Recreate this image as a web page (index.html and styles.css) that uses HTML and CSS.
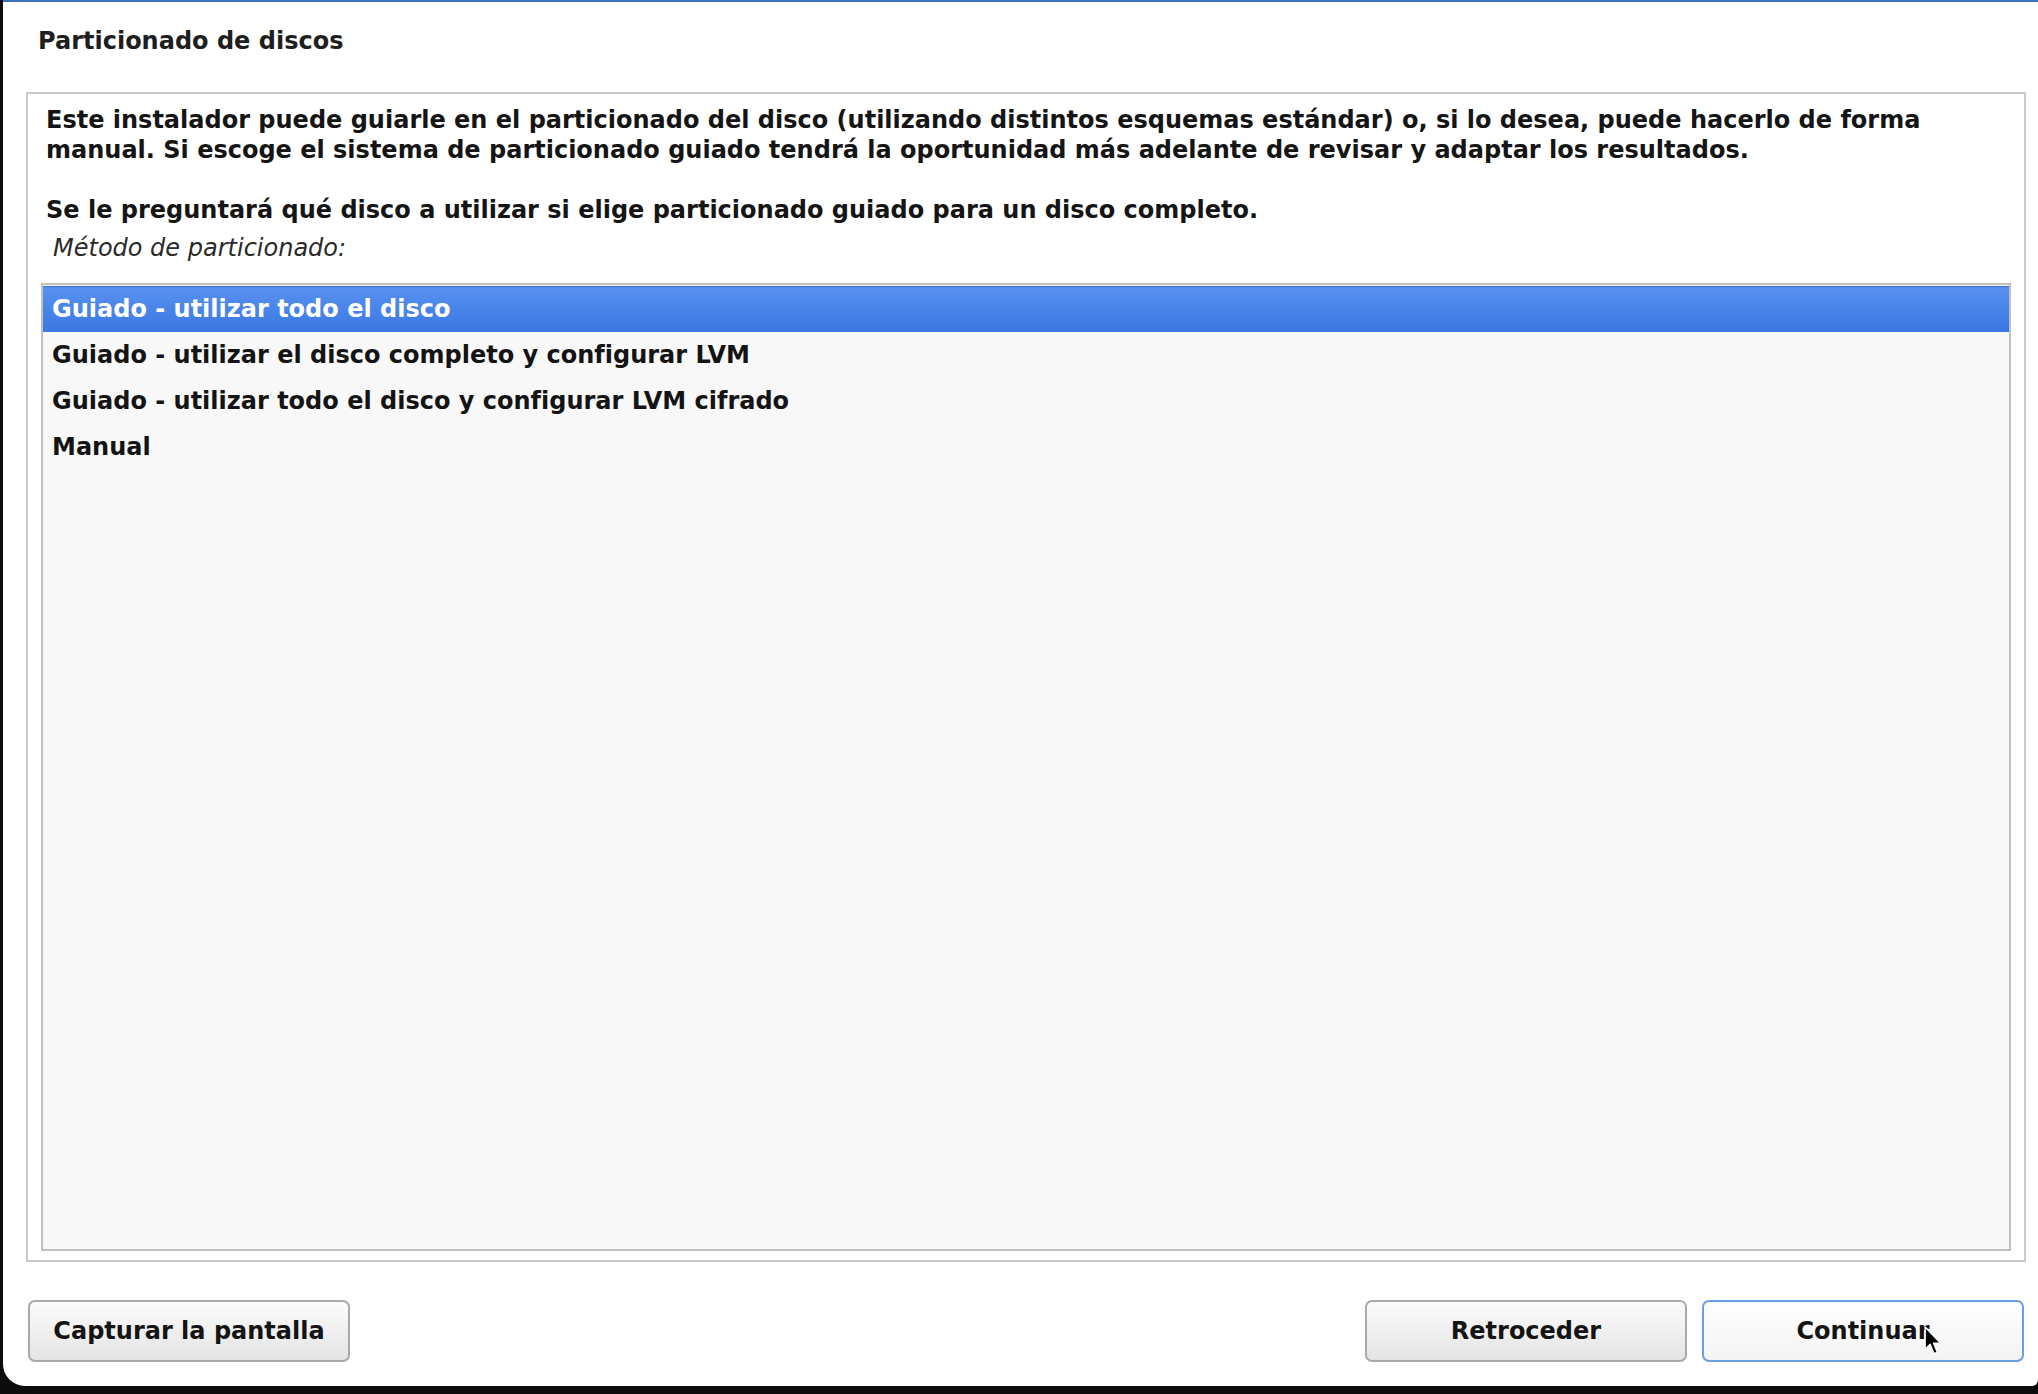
FILE: index.html
```html
<!DOCTYPE html>
<html lang="es">
<head>
<meta charset="utf-8">
<title>Particionado de discos</title>
<link rel="stylesheet" href="styles.css">
</head>
<body>
<div class="window">
  <h1 class="title">Particionado de discos</h1>
  <div class="frame">
    <p class="desc">Este instalador puede guiarle en el particionado del disco (utilizando distintos esquemas estándar) o, si lo desea, puede hacerlo de forma manual. Si escoge el sistema de particionado guiado tendrá la oportunidad más adelante de revisar y adaptar los resultados.</p>
    <p class="desc gap">Se le preguntará qué disco a utilizar si elige particionado guiado para un disco completo.</p>
    <div class="label">Método de particionado:</div>
    <ul class="list">
      <li class="row selected">Guiado - utilizar todo el disco</li>
      <li class="row">Guiado - utilizar el disco completo y configurar LVM</li>
      <li class="row">Guiado - utilizar todo el disco y configurar LVM cifrado</li>
      <li class="row">Manual</li>
    </ul>
  </div>
  <div class="buttons">
    <button class="btn">Capturar la pantalla</button>
    <div class="spacer"></div>
    <button class="btn">Retroceder</button>
    <button class="btn default">Continuar
      <svg class="cursor" width="20" height="31" viewBox="0 0 18 28"><path d="M1 1 L1 21 L5.5 16.5 L9 25 L12 23.6 L8.6 15.6 L15 15.6 Z" fill="#000" stroke="#fff" stroke-width="1.3" stroke-linejoin="round"/></svg>
    </button>
  </div>
</div>
</body>
</html>
```
FILE: styles.css
```css
* { box-sizing: border-box; }
html, body { margin: 0; padding: 0; }
body {
  background: #0c0c0c;
  width: 2038px;
  height: 1394px;
  overflow: hidden;
  font-family: "DejaVu Sans", "Liberation Sans", sans-serif;
  color: #151515;
}
.window {
  margin-left: 3px;
  height: 1386px;
  background: #ffffff;
  border-top: 2px solid #3d6fb8;
  border-bottom-left-radius: 22px;
  border-bottom-right-radius: 6px;
  display: flex;
  flex-direction: column;
}
.title {
  margin: 24px 0 0 35px;
  font-size: 24px;
  line-height: 30px;
  font-weight: bold;
  color: #1e1e1e;
  height: 30px;
}
.frame {
  margin: 36px 12px 0 23px;
  height: 1170px;
  border: 2px solid #cacaca;
  background: #ffffff;
  padding: 11px 13px 9px 13px;
  display: flex;
  flex-direction: column;
}
.desc {
  margin: 0;
  padding-left: 5px;
  font-size: 24px;
  line-height: 30px;
  font-weight: bold;
}
.desc.gap { margin-top: 30px; }
.label {
  margin-top: 8px;
  padding-left: 12px;
  font-size: 24px;
  line-height: 30px;
  font-style: italic;
  color: #2a2a2a;
}
.list {
  list-style: none;
  margin: 20px 0 0 0;
  padding: 0;
  flex: 1;
  border: 2px solid #bfbfbf;
  background: #f8f8f8;
}
.row {
  height: 46px;
  line-height: 46px;
  padding-left: 9px;
  font-size: 24px;
  font-weight: bold;
  color: #141414;
  white-space: nowrap;
}
.row.selected {
  margin-top: 1px;
  background: linear-gradient(#5891f0, #3a77e2);
  border-top: 1px solid #3a6fcf;
  line-height: 44px;
  color: #ffffff;
}
.buttons {
  display: flex;
  margin: 38px 14px 0 25px;
  gap: 15px;
}
.spacer { flex: 1; }
.btn {
  position: relative;
  width: 322px;
  height: 62px;
  border: 2px solid #a9a9a9;
  border-radius: 7px;
  background: linear-gradient(#fbfbfb, #e4e4e4);
  font-family: "DejaVu Sans", "Liberation Sans", sans-serif;
  font-size: 24px;
  font-weight: bold;
  color: #141414;
  padding: 0;
}
.btn.default {
  border-color: #6b9de0;
  background: linear-gradient(#ffffff, #f3f3f3);
}
.cursor {
  position: absolute;
  left: 220px;
  top: 24px;
}
```
